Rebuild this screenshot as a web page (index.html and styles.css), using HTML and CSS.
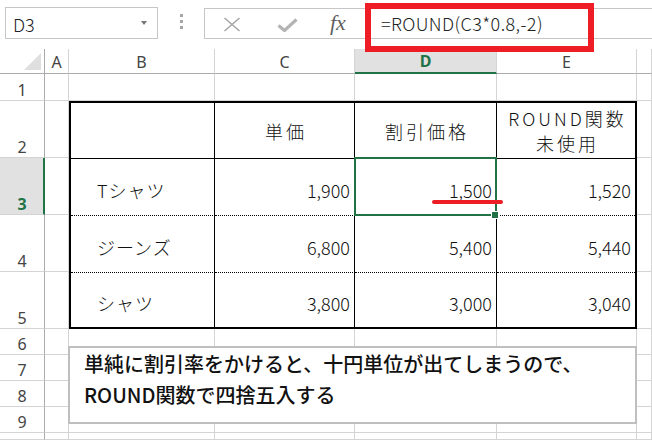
FILE: index.html
```html
<!DOCTYPE html>
<html lang="ja">
<head>
<meta charset="utf-8">
<link rel="stylesheet" href="styles.css">
</head>
<body>
<div class="app">
  <div class="topbar">
    <div class="namebox"><span class="nb-text">D3</span><span class="nb-arrow"></span></div>
    <div class="dots"><i></i><i></i><i></i></div>
    <div class="fbar">
      <svg class="ico-x" width="18" height="15" viewBox="0 0 18 15"><path d="M1.5 1 L16.5 14 M16.5 1 L1.5 14" stroke="#a8a8a8" stroke-width="1.6" fill="none"/></svg>
      <svg class="ico-check" width="21" height="14" viewBox="0 0 21 14"><path d="M1.5 7.5 L7.5 12.5 L19.5 1.5" stroke="#b4b4b4" stroke-width="3.2" fill="none"/></svg>
      <span class="fx">fx</span>
      <span class="formula">=ROUND(C3*0.8,-2)</span>
    </div>
  </div>

  <div class="sheet">
    <div class="ch corner"><span class="tri"></span></div>
    <div class="ch">A</div>
    <div class="ch">B</div>
    <div class="ch">C</div>
    <div class="ch ch-sel">D</div>
    <div class="ch">E</div>
    <div class="ch"></div>

    <div class="rh">1</div><div class="c"></div><div class="c"></div><div class="c"></div><div class="c"></div><div class="c"></div><div class="c"></div>
    <div class="rh">2</div><div class="c"></div><div class="c"></div>
    <div class="rh rh-sel">3</div><div class="c"></div><div class="c"></div>
    <div class="rh">4</div><div class="c"></div><div class="c"></div>
    <div class="rh">5</div><div class="c"></div><div class="c"></div>
    <div class="rh">6</div><div class="c"></div><div class="c"></div><div class="c"></div><div class="c"></div><div class="c"></div><div class="c"></div>
    <div class="rh">7</div><div class="c"></div><div class="c"></div><div class="c"></div><div class="c"></div><div class="c"></div><div class="c"></div>
    <div class="rh">8</div><div class="c"></div><div class="c"></div><div class="c"></div><div class="c"></div><div class="c"></div><div class="c"></div>
    <div class="rh">9</div><div class="c"></div><div class="c"></div><div class="c"></div><div class="c"></div><div class="c"></div><div class="c"></div>
    <div class="rh"></div><div class="c"></div><div class="c"></div><div class="c"></div><div class="c"></div><div class="c"></div><div class="c"></div>

    <div class="tbl">
      <div class="t t-head"></div>
      <div class="t t-head hc">単価</div>
      <div class="t t-head hc">割引価格</div>
      <div class="t t-head hc last two">ROUND関数<br>未使用</div>

      <div class="t dot lbl">Tシャツ</div>
      <div class="t dot num">1,900</div>
      <div class="t dot num sel">1,500</div>
      <div class="t dot num last">1,520</div>

      <div class="t dot lbl">ジーンズ</div>
      <div class="t dot num">6,800</div>
      <div class="t dot num">5,400</div>
      <div class="t dot num last">5,440</div>

      <div class="t lbl bot">シャツ</div>
      <div class="t num bot">3,800</div>
      <div class="t num bot">3,000</div>
      <div class="t num bot last">3,040</div>
    </div>
  </div>

  <div class="redbox"></div>
  <div class="redline"></div>
  <div class="note">単純に割引率をかけると、十円単位が出てしまうので、<br>ROUND関数で四捨五入する</div>
</div>
</body>
</html>
```

FILE: styles.css
```css
html, body {
  margin: 0;
  padding: 0;
  background: #fff;
  overflow: hidden;
}
.app {
  position: relative;
  width: 652px;
  height: 440px;
  overflow: hidden;
  font-family: "Noto Sans", "Noto Sans CJK JP", sans-serif;
}

/* ---------- top bar ---------- */
.topbar {
  height: 49px;
  box-sizing: border-box;
  padding-top: 7px;
  display: flex;
  align-items: flex-start;
}
.namebox {
  margin-left: 5px;
  width: 153px;
  height: 32px;
  box-sizing: border-box;
  border: 1px solid #c6c6c6;
  display: flex;
  align-items: center;
  justify-content: space-between;
  padding: 0 10px 0 7px;
}
.nb-text {
  font-family: "Noto Sans CJK JP", sans-serif;
  font-weight: 300;
  font-size: 18px;
  color: #222;
  line-height: 1;
  margin-top: 1px;
}
.nb-arrow {
  width: 0;
  height: 0;
  border-left: 3.5px solid transparent;
  border-right: 3.5px solid transparent;
  border-top: 4px solid #777;
  margin-top: -1px;
}
.dots {
  width: 46px;
  height: 32px;
  display: flex;
  flex-direction: column;
  align-items: center;
  padding-top: 7px;
  box-sizing: border-box;
  gap: 3px;
}
.dots i {
  display: block;
  width: 3px;
  height: 3px;
  background: #a6a6a6;
}
.fbar {
  margin-top: 1px;
  flex: 1;
  height: 31px;
  box-sizing: border-box;
  border: 1px solid #c6c6c6;
  border-right: none;
  display: flex;
  align-items: center;
  padding-left: 18px;
}
.ico-x { margin-top: 1px; }
.ico-check { margin-left: 36px; margin-top: 3px; }
.fx {
  margin-left: 32px;
  font-family: "Liberation Serif", serif;
  font-style: italic;
  font-size: 22px;
  color: #5f5f5f;
  line-height: 1;
  margin-top: -2px;
}
.formula {
  margin-left: 35px;
  font-family: "Noto Sans CJK JP", sans-serif;
  font-weight: 300;
  font-size: 18px;
  letter-spacing: 0.4px;
  color: #222;
  line-height: 1;
  margin-top: -1px;
}

/* ---------- sheet ---------- */
.sheet {
  display: grid;
  grid-template-columns: 45px 24px 146px 140px 142px 140px 15px;
  grid-template-rows: 25px 27px 57px 57px 57px 57px 26px 26px 26px 26px 1fr;
  height: 391px;
}
.ch {
  box-sizing: border-box;
  border-right: 1px solid #d4d4d4;
  border-bottom: 1px solid #ababab;
  display: flex;
  align-items: center;
  justify-content: center;
  font-size: 16px;
  color: #444;
  line-height: 1;
  padding-top: 1px;
}
.ch.corner {
  border-right: 1px solid #ababab;
  position: relative;
}
.tri {
  position: absolute;
  right: 3px;
  bottom: 3px;
  width: 0;
  height: 0;
  border-left: 17px solid transparent;
  border-bottom: 17px solid #dfdfdf;
}
.ch-sel {
  background: #e1e1e1;
  border-bottom: 2px solid #217346;
  color: #217346;
  font-weight: bold;
}
.rh {
  box-sizing: border-box;
  border-right: 1px solid #ababab;
  border-bottom: 1px solid #d4d4d4;
  display: flex;
  align-items: flex-end;
  justify-content: center;
  font-size: 16px;
  line-height: 19px;
  color: #444;
}
.rh-sel {
  background: #e1e1e1;
  border-right: 2px solid #217346;
  color: #217346;
  font-weight: bold;
  padding-left: 1px;
}
.c {
  box-sizing: border-box;
  border-right: 1px solid #d4d4d4;
  border-bottom: 1px solid #d4d4d4;
}

/* ---------- table ---------- */
.tbl {
  grid-column: 3 / 7;
  grid-row: 3 / 7;
  box-sizing: border-box;
  border: 2px solid #000;
  background: #fff;
  display: grid;
  grid-template-columns: 144px 140px 142px 1fr;
  grid-template-rows: 56px 57px 57px 1fr;
  font-family: "Noto Sans CJK JP", sans-serif;
  font-weight: 300;
  color: #111;
  font-size: 18px;
}
.t {
  box-sizing: border-box;
  border-right: 1px solid #000;
  display: flex;
  align-items: center;
}
.t.last { border-right: none; }
.t-head {
  border-bottom: 1px solid #000;
}
.hc {
  justify-content: center;
  text-align: center;
  letter-spacing: 3px;
  padding-left: 3px;
}
.two {
  line-height: 25px;
}
.dot {
  border-bottom: 1px dotted #000;
}
.lbl {
  padding-left: 26px;
  padding-top: 6px;
  letter-spacing: 1px;
}
.num {
  justify-content: flex-end;
  padding-right: 4px;
  padding-top: 6px;
}
.sel {
  position: relative;
}
.sel::after {
  content: "";
  position: absolute;
  left: -1px;
  top: -2px;
  right: -1px;
  bottom: -1px;
  border: 2px solid #217346;
}
.sel::before {
  content: "";
  position: absolute;
  right: -3px;
  bottom: -4px;
  width: 6px;
  height: 6px;
  background: #217346;
  border: 1px solid #fff;
  z-index: 2;
}

/* ---------- annotations ---------- */
.redbox {
  position: absolute;
  left: 365px;
  top: 3px;
  width: 229px;
  height: 49px;
  box-sizing: border-box;
  border: 6px solid #ee1c24;
}
.redline {
  position: absolute;
  left: 432px;
  top: 200px;
  width: 71px;
  height: 4px;
  border-radius: 2px;
  background: #ee1c24;
}
.note {
  position: absolute;
  left: 68px;
  top: 346px;
  width: 569px;
  height: 78px;
  box-sizing: border-box;
  border: 2px solid #bfbfbf;
  background: #fff;
  padding-left: 14px;
  font-family: "Noto Sans CJK JP", sans-serif;
  font-weight: 500;
  font-size: 20px;
  line-height: 31px;
  color: #111;
  white-space: nowrap;
}
```
